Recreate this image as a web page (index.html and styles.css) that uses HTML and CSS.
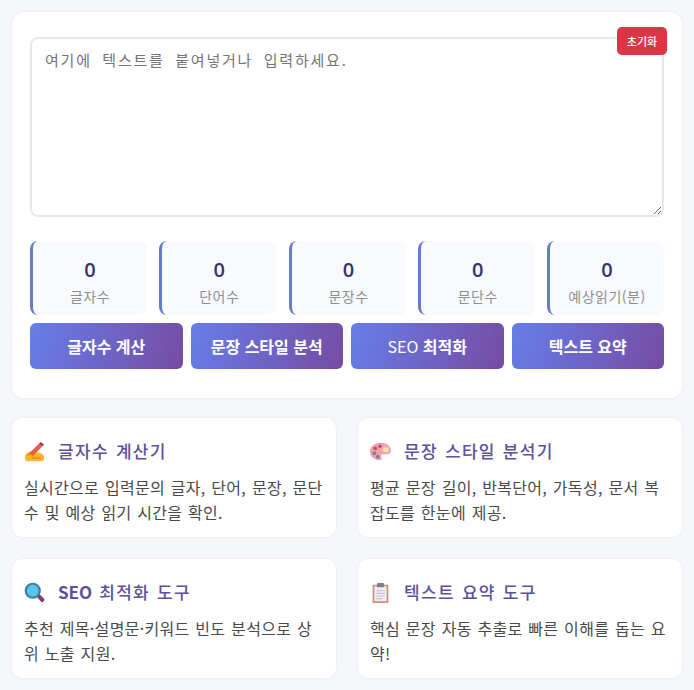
FILE: index.html
```html
<!DOCTYPE html>
<html lang="ko">
  <head>
    <meta charset="UTF-8" />
    <meta name="viewport" content="width=device-width, initial-scale=1.0" />
    <title>글자수 계산기</title>
    <link rel="stylesheet" href="styles.css">
  </head>
  <body>
    <div class="panel">
      <div class="input-wrap">
        <textarea class="text-input" placeholder="여기에 텍스트를 붙여넣거나 입력하세요."></textarea>
        <button class="reset-btn">초기화</button>
      </div>
      <div class="stats">
        <div class="stat"><div class="stat-num">0</div><div class="stat-label">글자수</div></div>
        <div class="stat"><div class="stat-num">0</div><div class="stat-label">단어수</div></div>
        <div class="stat"><div class="stat-num">0</div><div class="stat-label">문장수</div></div>
        <div class="stat"><div class="stat-num">0</div><div class="stat-label">문단수</div></div>
        <div class="stat"><div class="stat-num">0</div><div class="stat-label">예상읽기(분)</div></div>
      </div>
      <div class="actions">
        <button class="action-btn">글자수 계산</button>
        <button class="action-btn">문장 스타일 분석</button>
        <button class="action-btn seo">SEO <b>최적화</b></button>
        <button class="action-btn">텍스트 요약</button>
      </div>
    </div>

    <div class="info-grid">
      <div class="info-card">
        <h3>
          <svg class="icon" viewBox="0 0 24 24">
            <path d="M1 19c0-4 3-6 6-7l5-2 4 3c4 0 7 3 7 6 0 2-1 4-3 4H4c-2 0-3-2-3-4z" fill="#f9b52e"/>
            <path d="M4 17c2-2 5-3 8-2M9 20c3-1 7-1 10 0" stroke="#ea8a1f" stroke-width="1.500" fill="none"/>
            <path d="M6 14 17 3l4 3-11 11z" fill="#e5604a"/>
            <path d="M17 3l2-2 4 3-2 2z" fill="#a8325a"/>
          </svg>
          글자수 계산기
        </h3>
        <p>실시간으로 입력문의 글자, 단어, 문장, 문단 수 및 예상 읽기 시간을 확인.</p>
      </div>
      <div class="info-card">
        <h3>
          <svg class="icon" viewBox="0 0 24 24">
            <path d="M12 2C5 2 0 6 0 12s5 10 11 10c3 0 3-2 2-4-1-2 0-3 2-3h4c3 0 5-2 5-4 0-5-5-9-12-9z" fill="#f2a3a8"/>
            <circle cx="6" cy="8.500" r="2.200" fill="#d9405a"/>
            <circle cx="11.500" cy="6" r="2" fill="#b04a9a"/>
            <circle cx="5" cy="14" r="2.200" fill="#6d8a9c"/>
            <circle cx="9" cy="18" r="2.200" fill="#7a7f96"/>
            <ellipse cx="18" cy="10" rx="3.500" ry="2.800" fill="#fde3b0"/>
          </svg>
          문장 스타일 분석기
        </h3>
        <p>평균 문장 길이, 반복단어, 가독성, 문서 복잡도를 한눈에 제공.</p>
      </div>
      <div class="info-card">
        <h3>
          <svg class="icon" viewBox="0 0 24 24">
            <path d="M14 16l3-3 6 6c1 2-1 4-3 4z" fill="#7d3c86"/>
            <circle cx="10" cy="10" r="8" fill="#5cc4ea" stroke="#3f7f9e" stroke-width="2.500"/>
          </svg>
          <span><span class="latin">SEO</span> 최적화 도구</span>
        </h3>
        <p>추천 제목·설명문·키워드 빈도 분석으로 상위 노출 지원.</p>
      </div>
      <div class="info-card">
        <h3>
          <svg class="icon" viewBox="0 0 24 24">
            <rect x="3" y="3" width="18" height="21" rx="1" fill="#cf8f7c"/>
            <rect x="5" y="5" width="14" height="17" fill="#f3eef2"/>
            <rect x="8" y="1" width="8" height="5" rx="1" fill="#7d7f86"/>
            <path d="M7 10h10M7 13h10M7 16h10M7 19h7" stroke="#c3bdd8" stroke-width="1.200"/>
          </svg>
          텍스트 요약 도구
        </h3>
        <p>핵심 문장 자동 추출로 빠른 이해를 돕는 요약!</p>
      </div>
    </div>
  </body>
</html>
```

FILE: styles.css
```css
* {
  box-sizing: border-box;
}
body {
  margin: 0;
  padding: 12px;
  background-color: #f5f7fa;
  font-family: "Noto Sans CJK KR", "Noto Sans", sans-serif;
}
/* 입력 영역 */
.panel {
  height: 386px;
  padding: 25px 18px 0;
  background-color: #fff;
  border-radius: 12px;
  box-shadow: 0 0 3px rgba(0, 0, 0, 0.08);
}
.input-wrap {
  position: relative;
}
.text-input {
  display: block;
  width: 100%;
  height: 180px;
  padding: 11px 13px;
  border: 2px solid #e6e8ec;
  border-radius: 8px;
  font-family: "Noto Sans CJK KR", monospace;
  font-size: 15px;
  line-height: 20px;
  letter-spacing: 1.800px;
  word-spacing: 4.500px;
  outline: none;
}
.reset-btn {
  position: absolute;
  top: -10px;
  right: -3px;
  width: 50px;
  height: 28px;
  padding: 0;
  border: none;
  border-radius: 5px;
  background-color: #dc3545;
  color: #fff;
  font-family: inherit;
  font-size: 11px;
  font-weight: 500;
}
/* 통계 */
.stats {
  display: grid;
  grid-template-columns: repeat(5, 1fr);
  gap: 12.250px;
  margin-top: 24px;
}
.stat {
  height: 74px;
  padding-top: 16px;
  background-color: #f9fafd;
  border-left: 3px solid #667cc8;
  border-radius: 8px;
  text-align: center;
}
.stat-num {
  font-family: "Open Sans", sans-serif;
  font-size: 20px;
  font-weight: 600;
  line-height: 26px;
  color: #35356e;
}
.stat-label {
  margin-top: 3px;
  font-size: 14px;
  line-height: 20px;
  letter-spacing: 0.5px;
  color: #8f8f8f;
}
/* 버튼 */
.actions {
  display: grid;
  grid-template-columns: repeat(4, 1fr);
  gap: 8px;
  margin-top: 8px;
}
.action-btn {
  height: 46px;
  padding: 0;
  border: none;
  border-radius: 6px;
  background: linear-gradient(110deg, #667eea, #764ba2);
  color: #fff;
  font-family: inherit;
  font-size: 16px;
  font-weight: 700;
}
.action-btn.seo {
  font-weight: 400;
}
/* 안내 카드 */
.info-grid {
  display: grid;
  grid-template-columns: 1fr 1fr;
  gap: 22px;
  margin-top: 20px;
}
.info-card {
  height: 119px;
  padding: 19px 12px 0;
  background-color: #fff;
  border-radius: 10px;
  box-shadow: 0 0 3px rgba(0, 0, 0, 0.08);
}
.info-card h3 {
  display: flex;
  align-items: center;
  gap: 13px;
  margin: 0 0 10px;
  font-size: 17px;
  font-weight: 500;
  line-height: 28px;
  letter-spacing: 1.300px;
  word-spacing: 1px;
  color: #5d5299;
}
.latin {
  font-weight: 700;
  letter-spacing: 0;
}
.icon {
  flex: none;
  width: 21px;
  height: 21px;
}
.info-card p {
  margin: 0;
  font-size: 16px;
  line-height: 25px;
  letter-spacing: 0.3px;
  word-spacing: 1px;
  color: #4a4a4a;
}
```
